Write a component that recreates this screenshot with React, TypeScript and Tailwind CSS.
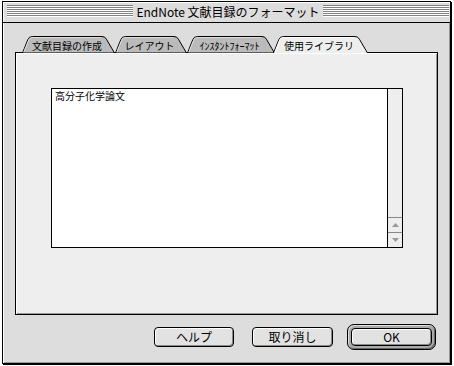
import React from "react";

const FONT = "font-['Noto_Sans_CJK_JP','Noto_Sans_CJK_SC',sans-serif]";

function Stripes({ className }: { className?: string }) {
  return (
    <div className={`flex flex-col ${className ?? ""}`}>
      {[0, 1, 2, 3, 4, 5].map((i) => (
        <div key={i} className="h-[2px] border-t border-[#808080] bg-white" />
      ))}
    </div>
  );
}

function Tab({
  w,
  label,
  active,
  className,
}: {
  w: number;
  label: string;
  active?: boolean;
  className: string;
}) {
  const side = `M0.5 17 L5.8 3.6 Q7 0.5 10.5 0.5 L${w - 13} 0.5 Q${w - 9.8} 0.5 ${w - 8.6} 3.2 L${w - 0.5} 17`;
  return (
    <div className={`relative h-[17px] shrink-0 ${active ? "z-10" : ""} ${className}`}>
      <svg className="absolute inset-0" width={w} height={17} viewBox={`0 0 ${w} 17`}>
        {active ? (
          <>
            <path d={side + " Z"} fill="#eeeeee" stroke="none" />
            <path d={side} fill="none" stroke="#000" strokeWidth={1} />
            <path d={`M1.8 16.5 L6.8 4 Q7.8 1.5 10.5 1.5 L${w - 14} 1.5`} fill="none" stroke="#ffffff" strokeWidth={1} />
          </>
        ) : (
          <>
            <path d={side + " Z"} fill="#bbbbbb" stroke="#000" strokeWidth={1} />
            <path d={`M1.8 16 L6.8 4 Q7.8 1.5 10.5 1.5 L${w - 14} 1.5`} fill="none" stroke="#dddddd" strokeWidth={1} />
          </>
        )}
      </svg>
      <div className="relative flex h-full items-center justify-center pr-[3px] pt-[3px] text-[10px] leading-[12px] text-black whitespace-nowrap">
        {label}
      </div>
    </div>
  );
}

function Button({ label, className }: { label: string; className: string }) {
  return (
    <div
      className={`flex items-center justify-center rounded-[4px] border border-black bg-[#e2e2e2] text-[12px] leading-[14px] text-black shadow-[inset_1px_1px_0_#ffffff,inset_-1px_-1px_0_#8a8a8a] ${className}`}
    >
      {label}
    </div>
  );
}

export default function App() {
  return (
    <div className={`relative h-[366px] w-[454px] overflow-hidden bg-white ${FONT}`}>
      <div className="ml-[2px] mt-[1px] flex h-[363px] w-[449px] flex-col border border-black bg-[#dddddd] shadow-[1px_1px_0_#000]">
        {/* Title bar */}
        <div className="flex h-[21px] shrink-0 items-center border-b border-black bg-[#dddddd] pl-[4px] pr-[1px] shadow-[inset_1px_1px_0_#ffffff]">
          <Stripes className="mb-[2px] flex-1" />
          <div className="px-[3px] text-[12px] leading-[14px] text-black whitespace-nowrap">
            EndNote 文献目録のフォーマット
          </div>
          <Stripes className="mb-[2px] flex-1" />
        </div>

        {/* Content */}
        <div className="flex flex-1 flex-col pl-[12px] pt-[13px] shadow-[inset_1px_0_0_#ffffff,inset_-1px_-1px_0_#999999]">
          {/* Tabs */}
          <div className="relative z-10 -mb-px flex h-[17px] pl-[7px]">
            <Tab w={93} className="w-[93px]" label="文献目録の作成" />
            <Tab w={72} className="w-[72px]" label="レイアウト" />
            <Tab w={88} className="w-[88px]" label="ｲﾝｽﾀﾝﾄﾌｫｰﾏｯﾄ" />
            <Tab w={95} className="-ml-[2px] w-[95px]" label="使用ライブラリ" active />
          </div>

          {/* Panel */}
          <div className="h-[263px] w-[423px] border border-black bg-[#eeeeee] p-[35px] shadow-[inset_1px_1px_0_#ffffff,inset_-1px_-1px_0_#999999]">
            <div className="flex h-[160px] w-[352px] border border-black bg-white">
              <div className="flex-1 pl-[3px] text-[10px] leading-[14px] text-black">高分子化学論文</div>
              <div className="flex w-[15px] flex-col border-l border-black bg-[#eeeeee]">
                <div className="flex-1" />
                <div className="flex h-[15px] items-center justify-center border-t border-[#888888]">
                  <svg width="7" height="4" viewBox="0 0 7 4">
                    <polygon points="3.5,0 7,4 0,4" fill="#999999" />
                  </svg>
                </div>
                <div className="flex h-[15px] items-center justify-center border-t border-[#888888]">
                  <svg width="7" height="4" viewBox="0 0 7 4">
                    <polygon points="0,0 7,0 3.5,4" fill="#999999" />
                  </svg>
                </div>
              </div>
            </div>
          </div>

          {/* Buttons */}
          <div className="mt-[9px] flex w-[423px] items-center justify-end pr-[2px]">
            <Button label="ヘルプ" className="h-[20px] w-[80px]" />
            <Button label="取り消し" className="ml-[18px] h-[20px] w-[81px]" />
            <div className="ml-[14px] flex h-[26px] w-[89px] items-center justify-center rounded-[7px] border border-black bg-[#aaaaaa] shadow-[inset_1px_1px_0_#dddddd,inset_-1px_-1px_0_#666666]">
              <Button label="OK" className="h-[18px] w-[81px]" />
            </div>
          </div>
        </div>
      </div>
    </div>
  );
}
